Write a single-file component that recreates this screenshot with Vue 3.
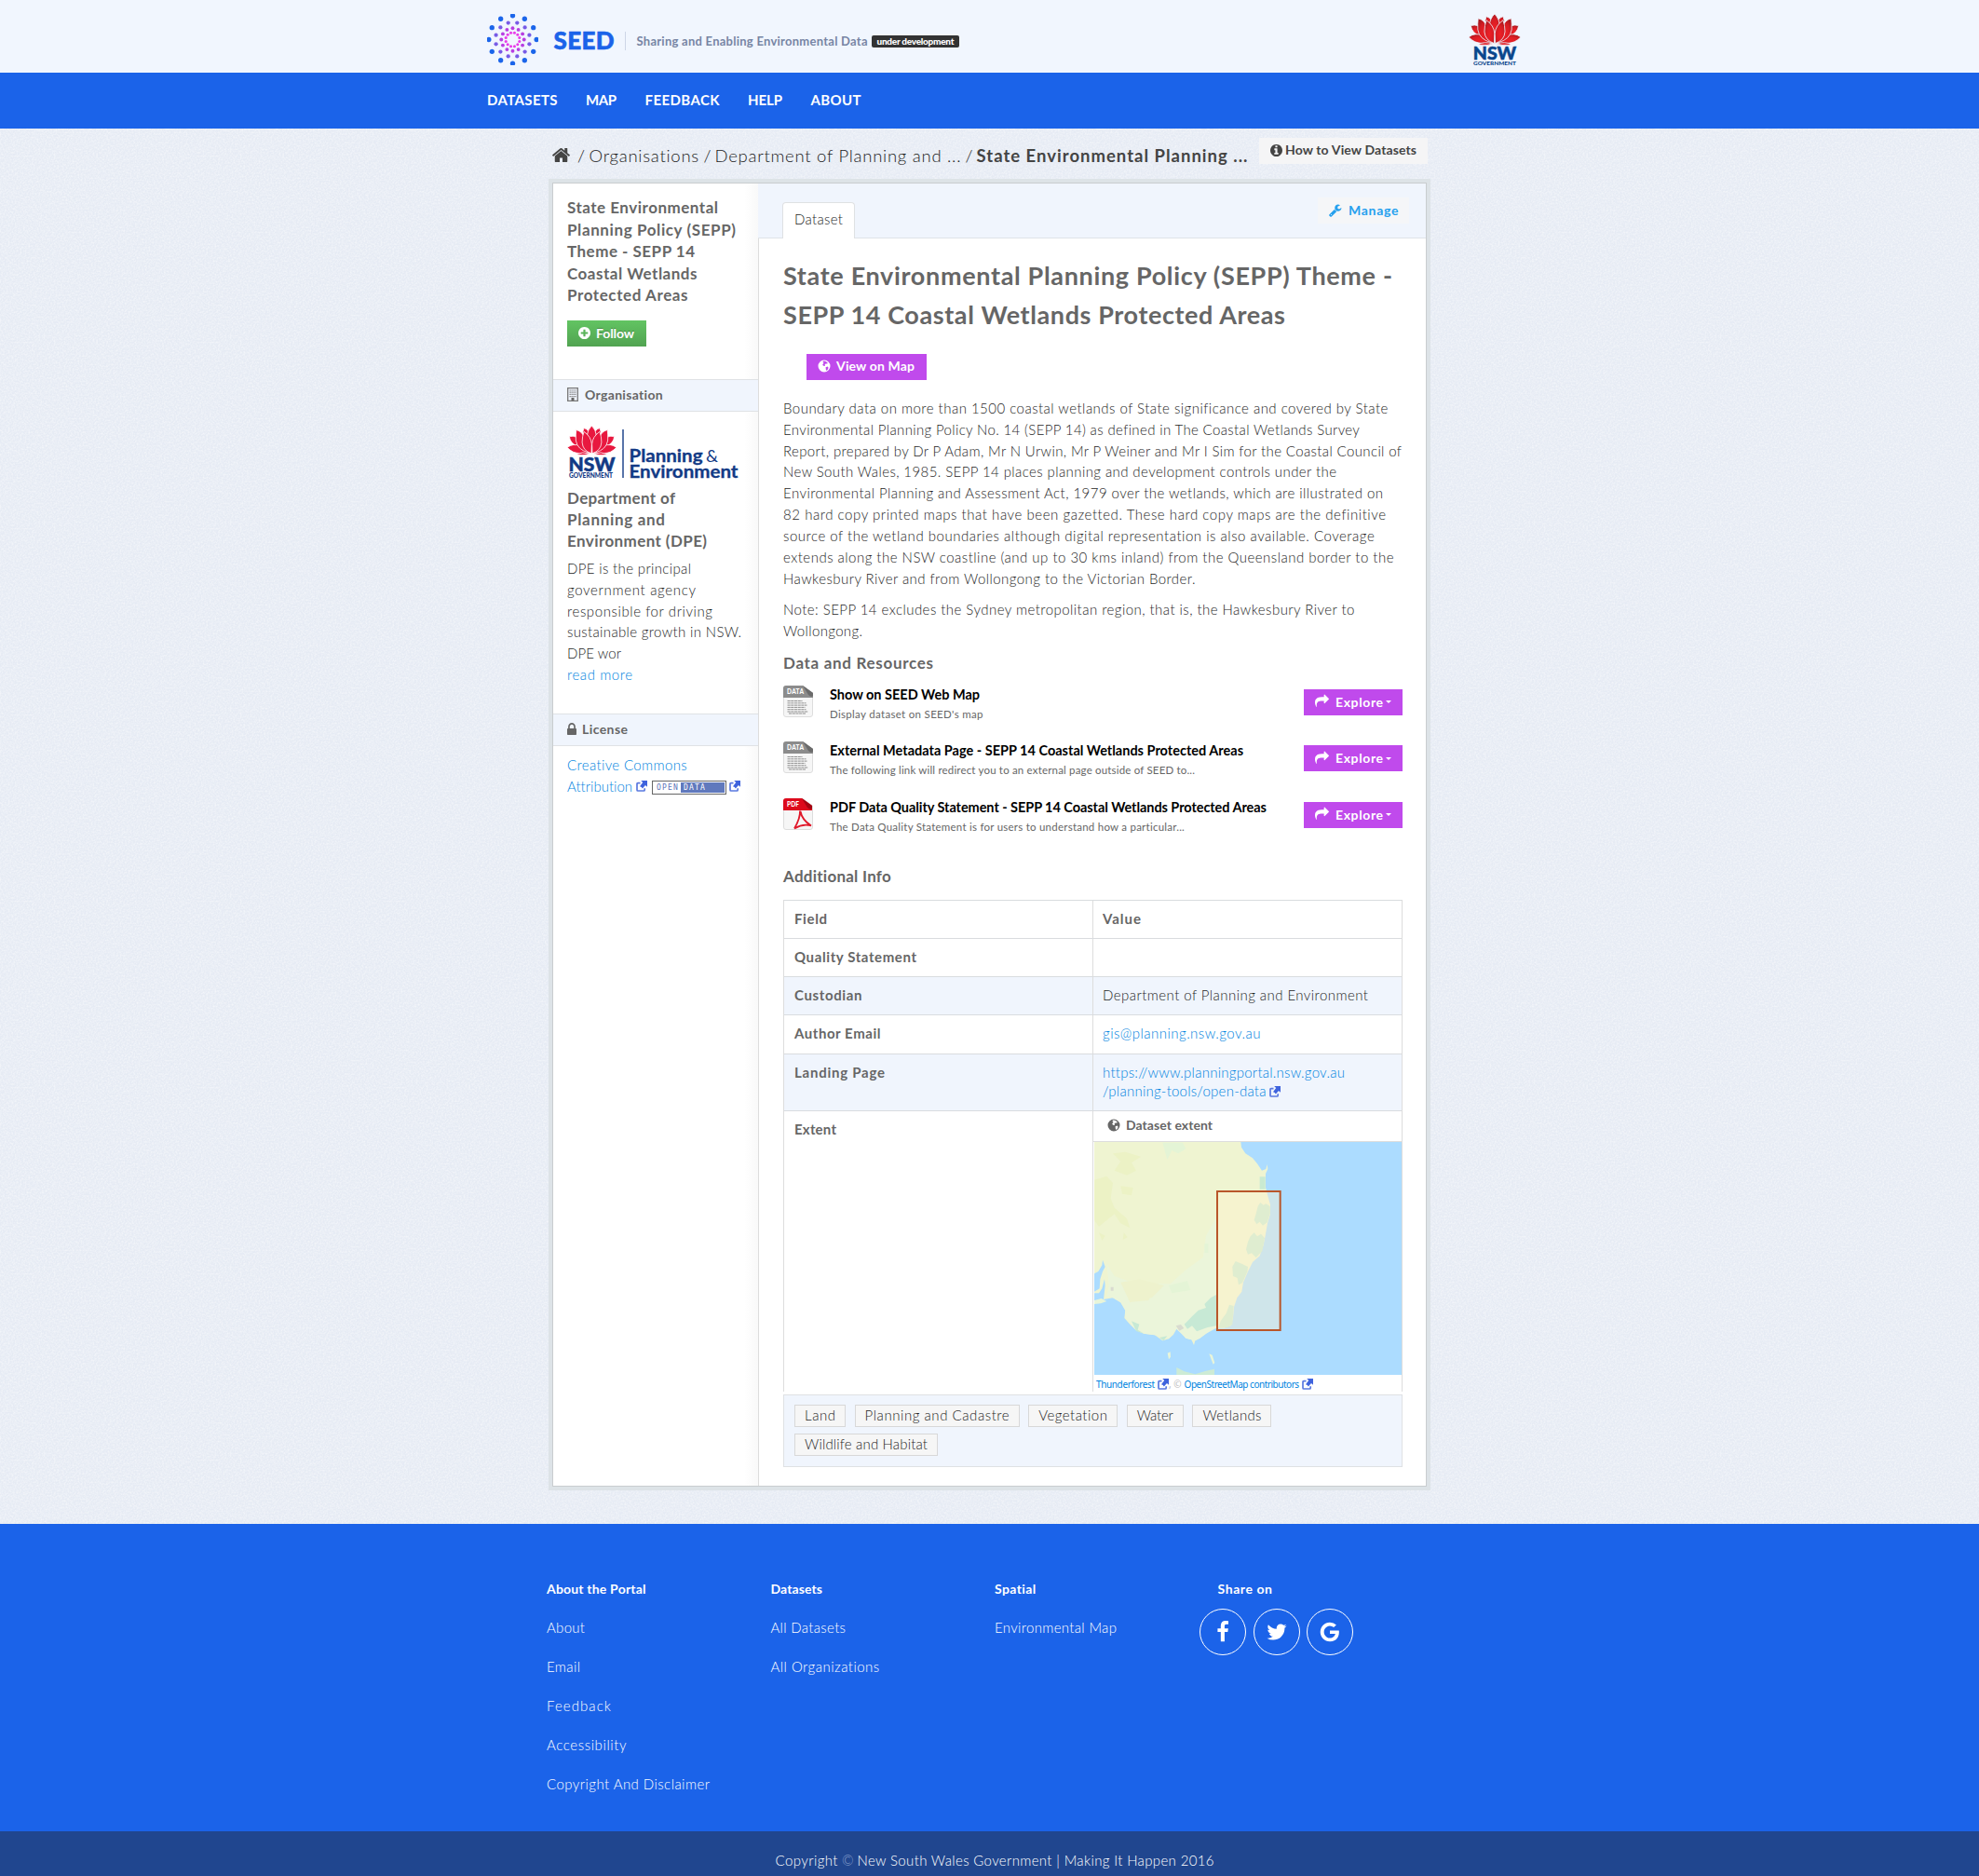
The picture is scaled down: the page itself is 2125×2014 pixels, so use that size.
<script setup>
// Stretches a single line of text to a fixed measure through its tracking.
const vFit = {
  mounted(el, { value }) {
    const n = el.textContent.trim().length
    const w = el.getBoundingClientRect().width
    if (n > 1) el.style.letterSpacing = ((value - w) / (n - 1)).toFixed(3) + 'px'
    el.style.width = value + 'px'
  },
}

const ring = (r, dot, fill, offset) =>
  Array.from({ length: 12 }, (_, i) => {
    const a = ((i * 30 + offset) * Math.PI) / 180
    return { x: 27 + r * Math.sin(a), y: 27 - r * Math.cos(a), dot, fill }
  })
const dots = [
  ...ring(25.2, 2.6, '#1b65ea', 0),
  ...ring(18.2, 2.1, '#785ce6', 15),
  ...ring(12, 1.9, '#b83fe2', 0),
  ...ring(7.4, 1.5, '#e93bea', 15),
]

const nav = [['DATASETS', 75.5], ['MAP', 33], ['FEEDBACK', 80], ['HELP', 37], ['ABOUT', 54]]
const sideTitle = [['State Environmental', 162], ['Planning Policy (SEPP)', 181], ['Theme - SEPP 14', 137], ['Coastal Wetlands', 139.5], ['Protected Areas', 129.5]]
const orgTitle = [['Department of', 116], ['Planning and', 105], ['Environment (DPE)', 150]]
const orgText = [['DPE is the principal', 133], ['government agency', 138], ['responsible for driving', 156], ['sustainable growth in NSW.', 187], ['DPE wor', 58]]
const title = [['State Environmental Planning Policy (SEPP) Theme -', 654], ['SEPP 14 Coastal Wetlands Protected Areas', 539]]
const para = [
  ['Boundary data on more than 1500 coastal wetlands of State significance and covered by State', 649],
  ['Environmental Planning Policy No. 14 (SEPP 14) as defined in The Coastal Wetlands Survey', 618.5],
  ['Report, prepared by Dr P Adam, Mr N Urwin, Mr P Weiner and Mr I Sim for the Coastal Council of', 664],
  ['New South Wales, 1985. SEPP 14 places planning and development controls under the', 594],
  ['Environmental Planning and Assessment Act, 1979 over the wetlands, which are illustrated on', 644],
  ['82 hard copy printed maps that have been gazetted. These hard copy maps are the definitive', 646.5],
  ['source of the wetland boundaries although digital representation is also available. Coverage', 635],
  ['extends along the NSW coastline (and up to 30 kms inland) from the Queensland border to the', 655.5],
  ['Hawkesbury River and from Wollongong to the Victorian Border.', 442.5],
]
const note = [['Note: SEPP 14 excludes the Sydney metropolitan region, that is, the Hawkesbury River to', 613.5], ['Wollongong.', 85]]
const resources = [
  { type: 'DATA', name: 'Show on SEED Web Map', nw: 161, desc: "Display dataset on SEED's map", dw: 164.5 },
  { type: 'DATA', name: 'External Metadata Page - SEPP 14 Coastal Wetlands Protected Areas', nw: 444, desc: 'The following link will redirect you to an external page outside of SEED to...', dw: 392 },
  { type: 'PDF', name: 'PDF Data Quality Statement - SEPP 14 Coastal Wetlands Protected Areas', nw: 469, desc: 'The Data Quality Statement is for users to understand how a particular...', dw: 381 },
]
const tags = [['Land', 33, 55], ['Planning and Cadastre', 155, 177], ['Vegetation', 74, 96], ['Water', 39, 61], ['Wetlands', 63, 85], ['Wildlife and Habitat', 132, 154]]
const footer = [
  { head: ['About the Portal', 106.5], links: [['About', 41], ['Email', 36], ['Feedback', 69], ['Accessibility', 85.5], ['Copyright And Disclaimer', 175]] },
  { head: ['Datasets', 55.5], links: [['All Datasets', 80.5], ['All Organizations', 117]] },
  { head: ['Spatial', 44.5], links: [['Environmental Map', 131]] },
]
const icons = {
  home: 'M1472 992v480q0 26-19 45t-45 19h-384v-384h-256v384h-384q-26 0-45-19t-19-45v-480q0-1 .5-3t.5-3l575-474 575 474q1 2 1 6zm223-69l-62 74q-8 9-21 11h-3q-13 0-21-7l-692-577-692 577q-12 8-24 7-13-2-21-11l-62-74q-8-10-7-23.5t11-21.5l719-599q32-26 76-26t76 26l244 204v-195q0-14 9-23t23-9h192q14 0 23 9t9 23v408l219 182q10 8 11 21.5t-7 23.5z',
  wrench: 'M448 1472q0-26-19-45t-45-19-45 19-19 45 19 45 45 19 45-19 19-45zm644-420l-682 682q-37 37-90 37-52 0-91-37l-106-108q-38-36-38-90 0-53 38-91l681-681q39 98 114.5 173.5t173.5 114.5zm634-435q0 39-23 106-47 134-164.5 217.5t-258.5 83.5q-185 0-316.5-131.5t-131.5-316.5 131.5-316.5 316.5-131.5q58 0 121.5 16.5t107.5 46.5q16 11 16 28t-16 28l-293 169v224l193 107q5-3 79-48.5t135.5-81 70.5-35.5q15 0 23.5 10t8.5 25z',
  plus: 'M1344 960v-128q0-26-19-45t-45-19h-256v-256q0-26-19-45t-45-19h-128q-26 0-45 19t-19 45v256h-256q-26 0-45 19t-19 45v128q0 26 19 45t45 19h256v256q0 26 19 45t45 19h128q26 0 45-19t19-45v-256h256q26 0 45-19t19-45zm320-64q0 209-103 385.5t-279.5 279.5-385.5 103-385.5-103-279.5-279.5-103-385.5 103-385.5 279.5-279.5 385.5-103 385.5 103 279.5 279.5 103 385.5z',
  info: 'M1152 1376v-160q0-14-9-23t-23-9h-96v-512q0-14-9-23t-23-9h-320q-14 0-23 9t-9 23v160q0 14 9 23t23 9h96v320h-96q-14 0-23 9t-9 23v160q0 14 9 23t23 9h448q14 0 23-9t9-23zm-128-896v-160q0-14-9-23t-23-9h-192q-14 0-23 9t-9 23v160q0 14 9 23t23 9h192q14 0 23-9t9-23zm640 416q0 209-103 385.5t-279.5 279.5-385.5 103-385.5-103-279.5-279.5-103-385.5 103-385.5 279.5-279.5 385.5-103 385.5 103 279.5 279.5 103 385.5z',
  lock: 'M640 768h512v-192q0-106-75-181t-181-75-181 75-75 181v192zm832 96v576q0 40-28 68t-68 28h-960q-40 0-68-28t-28-68v-576q0-40 28-68t68-28h32v-192q0-184 132-316t316-132 316 132 132 316v192h32q40 0 68 28t28 68z',
  share: 'M1792 640q0 26-19 45l-512 512q-19 19-45 19t-45-19-19-45v-256h-224q-98 0-175.5 6t-154 21.5-133 42.5-105.5 69.5-80 101-48.5 138.5-17.5 181q0 55 5 123 0 6 2.5 23.5t2.5 26.5q0 15-8.5 25t-23.5 10q-16 0-28-17-7-9-13-22t-13.5-30-10.5-24q-127-285-127-451 0-199 53-333 162-403 875-403h224v-256q0-26 19-45t45-19 45 19l512 512q19 19 19 45z',
}
const social = [
  'M1343 12v264h-157q-86 0-116 36t-30 108v189h293l-39 296h-254v759h-306v-759h-255v-296h255v-218q0-186 104-288.5t277-102.5q147 0 228 12z',
  'M1684 408q-67 98-162 167 1 14 1 42 0 130-38 259.5t-115.5 248.5-184.5 210.5-258 146-323 54.5q-271 0-496-145 35 4 78 4 225 0 401-138-105-2-188-64.5t-114-159.5q33 5 61 5 43 0 85-11-112-23-185.5-111.5t-73.5-205.5v-4q68 38 146 41-66-44-105-115t-39-154q0-88 44-163 121 149 294.5 238.5t371.5 99.5q-8-38-8-74 0-134 94.5-228.5t228.5-94.5q140 0 236 102 109-21 205-78-37 115-142 178 93-10 186-50z',
  'M896 786h725q12 67 12 128 0 217-91 387.5t-259.5 266.5-386.5 96q-157 0-299-60.5t-245-163.5-163.5-245-60.5-299 60.5-299 163.5-245 245-163.5 299-60.5q300 0 515 201l-209 201q-123-119-306-119-129 0-238.5 65t-173.5 176.5-64 243.5 64 243.5 173.5 176.5 238.5 65q87 0 160-24t120-60 82-82 51.5-87 22.5-78h-436v-264z',
]
</script>

<template>
  <div class="page">
    <svg class="defs" width="0" height="0">
      <defs>
        <radialGradient id="petal" cx=".5" cy=".6" r=".6">
          <stop offset="0" stop-color="#ee2026" /><stop offset=".6" stop-color="#d81c24" /><stop offset="1" stop-color="#a8181e" />
        </radialGradient>
        <symbol id="waratah" viewBox="0 0 165 100">
          <g stroke-width="2.4" stroke-linejoin="round">
            <path d="M7 37Q18 33 32 38L36 70Q10 60 7 37z" /><path d="M158 37Q147 33 133 38L129 70Q155 60 158 37z" />
            <path d="M0 73Q20 58 44 68Q66 78 74 92Q40 96 20 88Q8 82 0 73z" /><path d="M165 73Q145 58 121 68Q99 78 91 92Q125 96 145 88Q157 82 165 73z" />
            <path d="M56 8Q66 10 72 20L62 40 52 22z" /><path d="M109 8Q99 10 93 20L103 40 113 22z" />
            <path d="M30 14Q52 20 56 40L70 90Q34 80 29 50Q28 30 30 14z" /><path d="M135 14Q113 20 109 40L95 90Q131 80 136 50Q137 30 135 14z" />
            <path d="M82 0Q96 14 98 34L82 70 66 34Q68 14 82 0z" />
            <path d="M56 20Q80 36 82 62L81 93Q52 84 50 56Q50 36 56 20z" /><path d="M109 20Q85 36 83 62L84 93Q113 84 115 56Q115 36 109 20z" />
            <path d="M30 96Q50 86 76 94Q60 101 38 98z" /><path d="M135 96Q115 86 89 94Q105 101 127 98z" />
          </g>
        </symbol>
        <symbol id="globe" viewBox="0 0 14 14">
          <path fill-rule="evenodd" d="M7 .5a6.5 6.500 0 1 0 0 13 6.500 6.500 0 0 0 0-13zM6.200 1.600 8.200 1.800 10.600 3.200 10.400 4.600 8.600 4.400 7.600 5.600 8 7 6 6.800 5.200 5.200 6.600 3.800 5.400 2.800zM8.600 8.200 10.600 7.600 11.600 8.800 10.800 10.800 9.400 12 8.800 10.400z" />
        </symbol>
        <symbol id="ext" viewBox="0 0 12 12">
          <path d="M4.5 2.7H2Q1 2.7 1 3.7V10Q1 11 2 11H8.2Q9.2 11 9.2 10V8.2" fill="none" stroke="#5b79e0" stroke-width="1.7" />
          <path d="M5.2 0H12V6.8L10 4.9 6.800 8.400 5.800 7 4 6.200 7.200 2z" fill="#3f63dd" />
        </symbol>
      </defs>
    </svg>

    <header class="top">
      <svg class="rings" width="55" height="55" viewBox="0 0 54 54">
        <circle v-for="(d, i) in dots" :key="i" :cx="d.x" :cy="d.y" :r="d.dot" :fill="d.fill" />
      </svg>
      <b class="seed" v-fit="65">SEED</b>
      <i class="rule"></i>
      <span class="tagline" v-fit="248">Sharing and Enabling Environmental Data</span>
      <span class="dev"><b v-fit="83">under development</b></span>
      <svg class="nsw" width="56" height="57" viewBox="0 0 165 168">
        <use href="#waratah" x="0" y="0" width="165" height="100" fill="url(#petal)" stroke="#f1f6fe" />
        <text x="14" y="145" textLength="137" lengthAdjust="spacingAndGlyphs" class="nsw-a" fill="#09468c">NSW</text>
        <text x="15" y="163" textLength="135" lengthAdjust="spacingAndGlyphs" class="nsw-b" fill="#09468c">GOVERNMENT</text>
      </svg>
    </header>

    <nav class="nav"><span v-for="n in nav" :key="n[0]" v-fit="n[1]">{{ n[0] }}</span></nav>

    <div class="crumbs">
      <svg class="home" width="21" height="21" viewBox="40 0 1712 1792"><path :d="icons.home" /></svg>
      <span class="sl first">/</span><span v-fit="118">Organisations</span>
      <span class="sl">/</span><span v-fit="264">Department of Planning and ...</span>
      <span class="sl">/</span><b v-fit="291">State Environmental Planning ...</b>
      <span class="howto">
        <svg width="13" height="13" viewBox="128 128 1536 1536"><path :d="icons.info" /></svg>
        <b v-fit="141">How to View Datasets</b>
      </span>
    </div>

    <main class="box">
      <aside class="side">
        <section class="s1">
          <h2 class="h2"><span v-for="l in sideTitle" :key="l[0]" v-fit="l[1]">{{ l[0] }}</span></h2>
          <span class="btn follow">
            <svg width="13" height="13" viewBox="128 128 1536 1536"><path :d="icons.plus" /></svg>
            <b v-fit="41">Follow</b>
          </span>
        </section>
        <h3 class="bar">
          <svg width="12" height="15" viewBox="0 0 12 15">
            <path d="M.7.7h10.6v13.6H.7z" fill="none" stroke="#777" stroke-width="1.3" />
            <path d="M2.5 3h7M2.5 5.2h7M2.5 7.4h7M2.5 9.6h7" stroke="#888" stroke-width="1.2" stroke-dasharray="1.4 .5" />
            <path d="M4.5 11h3v3h-3z" fill="#666" />
          </svg>
          <b v-fit="84">Organisation</b>
        </h3>
        <section class="s2">
          <svg class="dpe" width="185" height="64" viewBox="0 0 185 64">
            <use href="#waratah" x="0" y="0" width="53" height="32" fill="#e8183f" stroke="#fff" />
            <g fill="#123a85">
              <text x="1.5" y="49" textLength="50" lengthAdjust="spacingAndGlyphs" class="dpe-n">NSW</text>
              <text x="2" y="56.300" textLength="47" lengthAdjust="spacingAndGlyphs" class="dpe-g">GOVERNMENT</text>
              <path d="M59.3 4h1.4v52h-1.4z" />
              <text x="66.500" y="38.500" textLength="79" lengthAdjust="spacingAndGlyphs" class="dpe-t">Planning</text>
              <text x="149" y="38.500" textLength="13" lengthAdjust="spacingAndGlyphs" class="dpe-amp">&amp;</text>
              <text x="66.500" y="56" textLength="117" lengthAdjust="spacingAndGlyphs" class="dpe-t">Environment</text>
            </g>
          </svg>
          <h2 class="h2 org"><span v-for="l in orgTitle" :key="l[0]" v-fit="l[1]">{{ l[0] }}</span></h2>
          <p class="copy"><span v-for="l in orgText" :key="l[0]" v-fit="l[1]">{{ l[0] }}</span><a v-fit="70">read more</a></p>
        </section>
        <h3 class="bar lic">
          <svg width="10" height="13" viewBox="320 128 1152 1408" preserveAspectRatio="none"><path :d="icons.lock" /></svg>
          <b v-fit="49">License</b>
        </h3>
        <section class="s3">
          <p class="copy"><a v-fit="129">Creative Commons</a></p>
          <p class="attr">
            <a v-fit="70">Attribution</a>
            <svg width="12" height="12"><use href="#ext" /></svg>
            <span class="od"><span>OPEN</span><span class="data">DATA</span></span>
            <svg width="12" height="12"><use href="#ext" /></svg>
          </p>
        </section>
      </aside>

      <article class="main">
        <div class="tabs">
          <span class="tab"><span v-fit="52">Dataset</span></span>
          <span class="manage">
            <svg width="14" height="14" viewBox="64 64 1728 1728"><path :d="icons.wrench" /></svg>
            <b v-fit="53.5">Manage</b>
          </span>
        </div>
        <div class="content">
          <h1 class="h1"><span v-for="l in title" :key="l[0]" v-fit="l[1]">{{ l[0] }}</span></h1>
          <span class="btn view">
            <svg width="14" height="14"><use href="#globe" /></svg>
            <b v-fit="84">View on Map</b>
          </span>
          <p class="copy p1"><span v-for="l in para" :key="l[0]" v-fit="l[1]">{{ l[0] }}</span></p>
          <p class="copy p2"><span v-for="l in note" :key="l[0]" v-fit="l[1]">{{ l[0] }}</span></p>
          <h2 class="sub"><span v-fit="161">Data and Resources</span></h2>
          <ul class="res">
            <li v-for="r in resources" :key="r.name">
              <svg class="file" width="32" height="34" viewBox="0 0 32 34">
                <path d="M.5 3Q.5.5 3 .5H21L31.5 8V31Q31.5 33.5 29 33.5H3Q.5 33.5.5 31z" fill="#f6f6f6" stroke="#ddd" />
                <template v-if="r.type === 'DATA'">
                  <path d="M0 13V3Q0 0 3 0H21L32 8V13z" fill="#8c8c8c" /><path d="M21 0 32 8V11Q30 13 27 10z" fill="#6b6b6b" />
                  <path d="M4.500 16.500h16M4.500 18.800h20M4.500 21.100h21M4.500 23.400h19M4.500 25.700h20M4.500 28h22M6 30h18" stroke="#8f8f8f" stroke-width="1" stroke-dasharray="3.2 .5" />
                </template>
                <template v-else>
                  <path d="M0 13V3Q0 0 3 0H20L31 8V13z" fill="#dd0a1c" /><path d="M20 0 31 8V11Q29 13 26 10z" fill="#a30612" />
                  <path d="M18 13.500Q18.500 21 12 32.500M18.500 14Q20 23 30 29.500Q21 27 12 32.500" fill="none" stroke="#e0182a" stroke-width="1.8" />
                </template>
                <text x="4" y="9.200" :textLength="r.type === 'DATA' ? 18 : 13" class="ftype">{{ r.type }}</text>
              </svg>
              <div class="rt"><b v-fit="r.nw">{{ r.name }}</b><span v-fit="r.dw">{{ r.desc }}</span></div>
              <span class="btn explore">
                <svg width="15" height="15" viewBox="0 0 1792 1792"><path :d="icons.share" /></svg>
                <b v-fit="51">Explore</b><i class="caret"></i>
              </span>
            </li>
          </ul>
          <h2 class="sub add"><span v-fit="116">Additional Info</span></h2>
          <div class="table">
            <div class="row"><b><span v-fit="35">Field</span></b><b><span v-fit="41">Value</span></b></div>
            <div class="row"><b><span v-fit="131">Quality Statement</span></b><div></div></div>
            <div class="row alt"><b><span v-fit="72.5">Custodian</span></b><div><span v-fit="285">Department of Planning and Environment</span></div></div>
            <div class="row r4"><b><span v-fit="92.5">Author Email</span></b><div><a v-fit="169.5">gis@planning.nsw.gov.au</a></div></div>
            <div class="row alt r5">
              <b><span v-fit="97">Landing Page</span></b>
              <div><a v-fit="259.5">https://www.planningportal.nsw.gov.au</a><br /><a v-fit="175.5">/planning-tools/open-data</a><svg class="e" width="12" height="12"><use href="#ext" /></svg></div>
            </div>
            <div class="row r6">
              <b><span v-fit="45">Extent</span></b>
              <div class="ext">
                <div class="exth"><svg width="14" height="14"><use href="#globe" /></svg><b v-fit="93">Dataset extent</b></div>
                <svg class="map" width="330" height="250" viewBox="45 198 990 750">
                  <path fill="#acdcff" d="M45 198h990v750H45z" />
                  <path fill="#eff4d1" d="M45 198H517L519 215 532 235 555 250 570 268 585 290 598 285 602 270 604 285 597 300 597 345 605 375 612 400 612 430 603 460 596 500 590 530 578 565 555 585 540 615 525 650 520 680 505 700 495 730 492 765 485 790 462 797 430 797 405 815 385 830 370 838 366 852 358 835 340 830 325 812 310 800 300 818 285 832 265 838 240 820 205 815 180 805 160 785 142 765 145 740 130 715 105 700 75 705 80 660 78 640 70 670 60 685 45 685V680L62 670 64 640 72 615 80 600 72 578 70 595 58 615 45 622z" />
                  <path fill="#ebf5da" d="M85 590 110 630 180 655 290 655 340 610 395 570 405 500 438 440V797L405 815 385 830 370 838 340 830 310 800 285 832 240 820 205 815 180 805 145 765 145 740 130 715 105 700 85 695 92 660z" />
                  <path fill="#ecf2c5" d="M45 320 85 308 105 330 98 380 110 410 150 445 160 475 130 460 110 430 60 470 45 450zM105 235l40-5 50 15-30 20 15 25-30 15-40-15 20-30zM130 340l40 5-5 25-30-5zM60 490l20 10-10 15zM140 490l12 15-15 8z" />
                  <path fill="#eef2cd" d="M130 650l60-10 80 20-40 40-70 15zM160 700l70-10-10 18-55 5z" />
                  <path fill="#e4f4d6" d="M265 200h65l10 20-25 15-20-10-15 30zM285 660l60-15 10 30-60 10zM400 525h12v30h-12z" />
                  <path fill="#c7e9d5" d="M438 690 420 700 400 720 405 732 380 740 360 760 335 785 345 800 360 790 375 808 410 795 438 790zM165 775l25 10-5 18 20 12-25-8zM255 828l25-5-12 15z" />
                  <path fill="#c9ead2" d="M578 310h18v40h-18zM572 405l8-12 10 8 8-4 13 8 1 22-10 30-14 10-10-12-10 8-8-14 6-20zM540 520l8-18 12-12 10 12 12-8 12 14-8 42-20 20-14-14-12 4-6-16zM490 600l10-18 20 8 20 10-2 16-16 36-12 6-4-22-14-6zM452 775l18-25 10-28 14 4-4 60-15 9-30 2z" />
                  <path fill="#d9dbd0" d="M308 790l16-4 10 12-15 8zM98 665h9v12h-9z" />
                  <path fill="#e9f5d9" d="M45 708 68 702 85 711 66 718 45 720zM281 878l9-4 1 16-6 8zM415 880l10 4 8 25-5 5z" />
                  <path fill="#cdebd5" d="M310 924 335 937 370 946 405 935 432 929V948H310z" />
                  <path fill="#fff0cc" fill-opacity=".42" stroke="#b9562a" stroke-width="6" d="M441 357h203v447h-203z" />
                </svg>
                <div class="osm"><a v-fit="63">Thunderforest</a><svg width="12" height="12"><use href="#ext" /></svg><span>, ©</span><a class="os" v-fit="123.5">OpenStreetMap contributors</a><svg width="12" height="12"><use href="#ext" /></svg></div>
              </div>
            </div>
          </div>
          <div class="tags"><span v-for="t in tags" :key="t[0]" :style="{ width: t[2] + 'px' }"><span v-fit="t[1]">{{ t[0] }}</span></span></div>
        </div>
      </article>
    </main>

    <footer class="foot">
      <div v-for="c in footer" :key="c.head[0]" class="col">
        <h4><b v-fit="c.head[1]">{{ c.head[0] }}</b></h4>
        <div v-for="l in c.links" :key="l[0]" class="fl"><span v-fit="l[1]">{{ l[0] }}</span></div>
      </div>
      <div class="col share">
        <h4><b v-fit="58.5">Share on</b></h4>
        <div class="social">
          <i v-for="(s, k) in social" :key="k"><svg width="24" height="24" viewBox="0 0 1792 1792"><path :d="s" /></svg></i>
        </div>
      </div>
    </footer>
    <div class="legal">
      <span v-fit="67">Copyright</span><span class="c">©</span><span v-fit="383">New South Wales Government | Making It Happen 2016</span>
    </div>
  </div>
</template>

<style>
body { margin: 0; background: #e9eef6; }
</style>

<style scoped>
.page { width: 2125px; height: 2014px; overflow: hidden; font: 300 15px Lato, "Open Sans", sans-serif; color: #262626; background: #e6ebf4 url("data:image/svg+xml,%3Csvg xmlns='http://www.w3.org/2000/svg' width='200' height='200'%3E%3Cfilter id='n'%3E%3CfeTurbulence type='fractalNoise' baseFrequency='.55' numOctaves='2' stitchTiles='stitch'/%3E%3CfeColorMatrix values='0 0 0 0 1 0 0 0 0 1 0 0 0 0 1 1.6 0 0 0 -.55'/%3E%3C/filter%3E%3Crect width='200' height='200' filter='url(%23n)' opacity='.6'/%3E%3C/svg%3E"); }
.defs { position: absolute; }
span, b, a { white-space: nowrap; }
b, h1, h2, h3, h4 { font-weight: 700; margin: 0; }
h1, h2, h3, .row > b, .exth { color: #666; }
p, ul { margin: 0; padding: 0; list-style: none; }
a { color: #0084e0; }
svg { display: block; fill: currentColor; flex: none; }
.top { height: 78px; background: #f1f6fe; display: flex; align-items: flex-start; padding-left: 523px; box-sizing: border-box; }
.rings { margin-top: 15px; }
.seed { margin: 28px 0 0 16.500px; font-size: 26px; font-weight: 900; line-height: 30px; color: #1b63e9; -webkit-text-stroke: .6px #1b63e9; }
.rule { width: 1px; height: 20px; background: #cdd6e6; margin: 34px 11.500px 0; }
.tagline { font-size: 13px; font-weight: 700; line-height: 16px; margin-top: 36px; color: #7785a4; }
.dev { margin: 38px 0 0 4.500px; height: 13px; width: 94px; box-sizing: border-box; padding-left: 5.500px; background: #333; border-radius: 2px; color: #fff; font-size: 10px; line-height: 13px; }
.dev b { font-weight: 900; display: inline-block; }
.nsw { margin: 15px 0 0 547px; }
.nsw-a { font: 900 56px Lato, sans-serif; stroke: #09468c; stroke-width: 1.500px; }
.nsw-b { font: 900 18px Lato, sans-serif; }
.nav { height: 60px; background: #1b63e9; display: flex; gap: 30.500px; padding-left: 523px; color: #fff; font-weight: 700; line-height: 59px; }
.crumbs { height: 58px; padding-left: 592px; display: flex; align-items: flex-start; color: #222; font-size: 18.500px; line-height: 40px; }
.crumbs > span, .crumbs > b { margin-top: 9px; }
.crumbs > b, .crumbs > .howto, .crumbs > .home { color: #444; }
.crumbs > .home { margin-top: 18px; }
.crumbs > .sl { width: 8px; margin: 9px 4px 0 5px; }
.crumbs > .first { width: 7px; margin: 9px 5.500px 0 7px; }
.crumbs > .howto { margin: 10px 0 0 12.500px; width: 181px; height: 28px; box-sizing: border-box; padding-left: 12px; background: #f5f5f6; display: flex; align-items: center; gap: 3px; font-size: 14px; line-height: 26px; }
.howto > *, .btn > svg, .btn > b { position: relative; top: -1px; }
.box { margin-left: 593px; width: 939px; height: 1400px; box-sizing: border-box; border: 1px solid #c9cdcf; box-shadow: 0 0 0 4px #dde3e7; background: #fff; display: flex; }
.side { width: 220px; flex: none; background: linear-gradient(90deg, #fff 205px, #f9f9f9); }
.side > section { padding-left: 15px; box-sizing: border-box; }
.s1 { height: 210px; padding-top: 14px; }
.h2 { font-size: 17px; line-height: 23.500px; }
.h2 span, .copy span, .copy a, .h1 span { display: block; width: fit-content; }
.btn { display: flex; align-items: center; height: 28px; box-sizing: border-box; padding-left: 12px; font-size: 14px; line-height: 26px; color: #fff; background: #c04aec; }
.follow { width: 85px; margin-top: 15.500px; gap: 6px; background: linear-gradient(#62c462, #51a351); text-shadow: 0 -1px 0 rgba(0,0,0,.25); }
.follow > b { top: 0; }
.bar { height: 35px; box-sizing: border-box; border: solid #dfe2e5; border-width: 1px 0; background: #f0f5fd; display: flex; align-items: center; gap: 7px; padding: 0 0 2px 15px; font-size: 14px; line-height: 30px; width: 220px; }
.lic { gap: 6px; }
.s2 { height: 324px; padding-top: 15px; }
.dpe-n { font: 900 20px Lato, sans-serif; stroke: #123a85; stroke-width: .5px; }
.dpe-g { font: 900 6.500px Lato, sans-serif; }
.dpe-t { font: 700 18px Lato, sans-serif; stroke: #123a85; stroke-width: .3px; }
.dpe-amp { font: 400 18px Lato, sans-serif; }
.h2.org { margin-top: 2px; line-height: 23px; }
.copy { line-height: 22.860px; margin-top: 6.800px; }
.s3 { padding-top: 2px; }
.attr { display: flex; align-items: center; line-height: 22.860px; }
.attr svg { margin: 0 5px 0 4px; }
.attr .od + svg { margin: 0 0 0 3px; }
.od { width: 80px; height: 15px; box-sizing: border-box; border: 1px solid #666; padding: 1px; background: #fff; display: flex; font: 8px/12px "DejaVu Sans Mono", monospace; letter-spacing: 1.200px; color: #5d74b8; margin-top: 3px; }
.od > span { width: 29px; height: 11px; padding-left: 3px; box-sizing: border-box; }
.od > .data { width: 47px; background: #6079bd; color: #fff; }
.main { width: 717px; }
.tabs { height: 59px; box-sizing: border-box; background: #f0f5fd; border-bottom: 1px solid #dfe3e8; display: flex; justify-content: space-between; align-items: flex-start; padding: 0 18px 0 26px; }
.tab { height: 39px; margin-top: 20px; width: 78px; box-sizing: border-box; border: 1px solid #dfe1e3; border-bottom: 0; border-radius: 4px 4px 0 0; background: #fff; padding-left: 12px; line-height: 35px; }
.manage { width: 98px; height: 28px; margin-top: 15px; box-sizing: border-box; background: #f5f6f8; padding-left: 12px; display: flex; align-items: center; gap: 7px; color: #25a0ee; font-size: 14px; line-height: 28px; }
.content { height: 1339px; box-sizing: border-box; padding: 19px 0 0 26px; border-left: 1px solid #ddd; }
.h1 { font-size: 27px; line-height: 42px; }
.view { width: 129px; margin: 21px 0 0 25px; gap: 6px; }
.p1 { margin-top: 18.800px; }
.p2 { margin-top: 10.700px; }
.sub { font-size: 17px; line-height: 24px; margin-top: 11.400px; }
.res { margin-top: 11.600px; }
.res li { height: 60.500px; display: flex; align-items: flex-start; width: 665px; }
.rt { margin: 1px 0 0 18px; display: flex; flex-direction: column; align-items: flex-start; flex: 1; }
.rt b { font-size: 14.500px; line-height: 18px; color: #000; }
.rt span { font-size: 11.500px; font-weight: 400; line-height: 16px; margin-top: 4px; color: #666; }
.ftype { font: 900 6.500px Lato, sans-serif; fill: #fff; }
.explore { width: 106px; margin-top: 4px; gap: 7px; }
.explore > b { top: 0; }
.caret { border: 3px solid transparent; border-top-color: #fff; border-bottom: 0; margin-left: -4px; }
.add { margin-top: 11.900px; }
.table { width: 665px; box-sizing: border-box; margin-top: 12.600px; border: solid #ddd; border-width: 0 1px; line-height: 20px; }
.row { height: 41px; display: flex; box-sizing: border-box; border-top: 1px solid #d9dcdf; }
.row > * { padding: 9px 0 0 11px; width: 331px; box-sizing: border-box; flex: none; }
.row > :last-child { width: 332px; border-left: 1px solid #ddd; padding-left: 10px; }
.alt { background: #f0f5fd; }
.r4 { height: 42px; }
.r5 { height: 61px; }
.r6 { height: 302px; }
.e { display: inline-block; margin-left: 3px; vertical-align: -1px; }
.row > .ext { padding: 0; }
.exth { height: 33px; box-sizing: border-box; border-bottom: 1px solid #ddd; display: flex; align-items: center; padding: 0 0 2px 15px; gap: 6px; font-size: 14px; line-height: 30px; }
.map { margin-left: 1px; }
.osm { display: flex; align-items: center; height: 20px; padding-left: 3px; gap: 3px; font: 400 10px/20px "Noto Sans", "Open Sans", sans-serif; }
.osm span { color: #bbb; margin-left: -3px; }
.osm .os { margin-left: 0; }
.tags { width: 665px; height: 78px; box-sizing: border-box; margin-top: 3px; border: 1px solid #dfe1e4; background: #f0f5fd; padding: 10px 100px 0 11px; display: flex; flex-wrap: wrap; gap: 6.500px 9.600px; align-content: flex-start; }
.tags > span { height: 24.500px; box-sizing: border-box; border: 1px solid #d8d8d8; background: #f6f6f6; padding-left: 10px; line-height: 21px; }
.foot { margin-top: 40px; height: 330px; box-sizing: border-box; padding: 59.600px 0 0 587px; background: #1b63e9; color: #fff; display: grid; grid-template-columns: repeat(4, 240.500px); }
.foot h4 { font-size: 14px; line-height: 20px; margin-bottom: 10.600px; }
.fl { line-height: 42px; }
.share { margin-left: -1px; }
.social { display: flex; gap: 7.500px; margin-left: -19.500px; margin-top: 11px; }
.social i { width: 50px; height: 50px; box-sizing: border-box; border: 1px solid #fff; border-radius: 50%; display: flex; align-items: center; justify-content: center; }
.legal { height: 48px; background: #20468f; color: #fff; padding-left: 832.500px; display: flex; line-height: 62px; }
.legal .c { color: #8da3d0; width: 12px; margin: 0 4.500px; }
</style>
